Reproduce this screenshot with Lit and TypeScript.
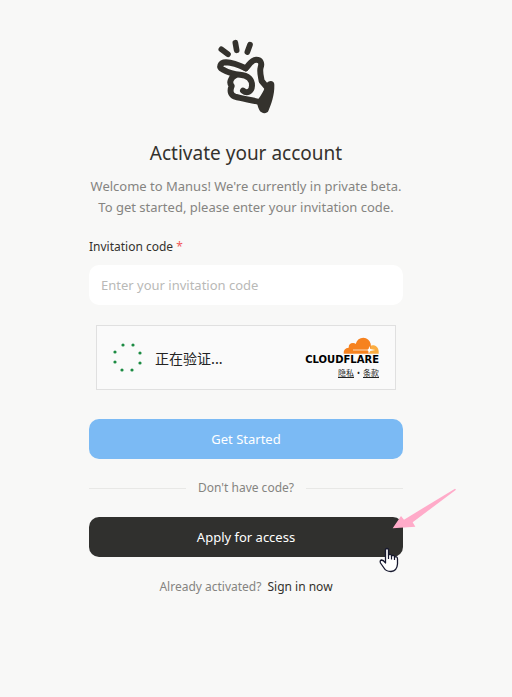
import { LitElement, html, css, svg } from "lit";
import { customElement } from "lit/decorators.js";

const SPINNER_DOTS = [
  [18, 4], [28, 4], [35, 12], [35, 22], [27, 29], [17, 29], [10, 21], [10, 11],
];

@customElement("turnstile-box")
class TurnstileBox extends LitElement {
  static styles = css`
    :host {
      display: flex;
      align-items: center;
      justify-content: space-between;
      box-sizing: border-box;
      width: 100%;
      max-width: 300px;
      height: 65px;
      padding: 0 16px 0 8px;
      border: 1px solid #e0e0e0;
      background: #fafafa;
      color: #232323;
    }
    .status {
      display: flex;
      align-items: center;
      gap: 6px;
      font: 14px/20px "Noto Sans CJK SC", sans-serif;
    }
    .spinner { display: block; }
    .brand {
      display: flex;
      flex-direction: column;
      align-items: flex-end;
    }
    .cloud { display: block; }
    .name {
      font: bold 10px/12px "DejaVu Sans", "Verdana", sans-serif;
      color: #000;
    }
    .links {
      display: flex;
      gap: 3px;
      margin-top: 1px;
      font: 8px/12px "Noto Sans CJK SC", sans-serif;
    }
    .dot { font-family: "Noto Sans", sans-serif; }
    a { color: #232323; text-decoration: underline; }
  `;

  render() {
    return html`
      <div class="status" role="status">
        <svg class="spinner" width="44" height="34" viewBox="0 0 44 34" aria-hidden="true">
          ${SPINNER_DOTS.map(([x, y]) => svg`<circle cx=${x} cy=${y} r="1.6" fill="#1c8b43" />`)}
        </svg>
        <span>正在验证...</span>
      </div>
      <div class="brand">
        <svg class="cloud" width="36" height="17" viewBox="0 0 108 51" aria-hidden="true">
          <path fill="#fbad41" d="M79 50L82 28Q86 23 93 25Q105 28 107 42V50Z" />
          <path fill="#f6821f" d="M2 50Q1 33 17 32Q17 18 30 18Q36 18 38 21Q44 2 61 2Q78 3 83 20Q85 28 79 50Z" />
          <path fill="none" stroke="#fbd9b8" stroke-width="3" d="M30 39H73" />
          <path fill="#fff" d="M79 27L82 36L97 39L82 42L77 50L76 42L72 39L77 35Z" />
        </svg>
        <span class="name">CLOUDFLARE</span>
        <div class="links"><a href="#privacy">隐私</a><span class="dot">•</span><a href="#terms">条款</a></div>
      </div>
    `;
  }
}

@customElement("app-root")
class AppRoot extends LitElement {
  static styles = css`
    :host {
      display: flex;
      flex-direction: column;
      align-items: center;
      box-sizing: border-box;
      min-height: 100vh;
      padding: 30px 20px 30px 0;
      background: #f8f8f7;
      color: #34322d;
      font: 13px/20px "Noto Sans", sans-serif;
    }
    .panel {
      display: flex;
      flex-direction: column;
      width: 100%;
      max-width: 314px;
    }
    .logo { display: block; align-self: center; }
    h1 {
      margin: 20px 0 10px;
      font-size: 19px;
      line-height: 26px;
      font-weight: 400;
      text-align: center;
    }
    .intro {
      margin: 0 0 19px;
      line-height: 21px;
      color: #858481;
      text-align: center;
      white-space: nowrap;
      align-self: center;
    }
    label { margin-bottom: 8px; font-size: 12px; }
    .required { color: #f25a5a; }
    input {
      box-sizing: border-box;
      width: 100%;
      height: 40px;
      margin: 0;
      padding: 0 12px;
      border: 0;
      border-radius: 10px;
      background: #fff;
      color: inherit;
      font: inherit;
    }
    input::placeholder { color: #b9b9b7; opacity: 1; }
    turnstile-box { align-self: center; margin: 20px 0 29px; }
    button {
      width: 100%;
      height: 40px;
      padding: 0;
      border: 0;
      border-radius: 10px;
      color: #fff;
      font: inherit;
    }
    .primary { background: #7bbaf4; }
    .dark { display: block; background: #30302e; }
    .divider {
      display: flex;
      align-items: center;
      gap: 12px;
      margin: 19px 0;
      font-size: 12px;
      color: #858481;
    }
    .divider::before,
    .divider::after {
      content: "";
      flex: 1;
      height: 1px;
      background: #e8e8e6;
    }
    .apply { position: relative; }
    .pointer, .arrow { position: absolute; pointer-events: none; }
    .pointer { right: 4px; top: 30px; }
    .arrow { right: -53px; top: -30px; }
    .signin {
      display: flex;
      justify-content: center;
      gap: 6px;
      margin: 20px 0 0;
      font-size: 12px;
      color: #858481;
    }
    .signin a { color: #34322d; text-decoration: none; }
  `;

  render() {
    return html`
      <main class="panel">
        <svg class="logo" width="80" height="90" viewBox="0 0 240 270" aria-hidden="true">
          <g fill="none" stroke="#34322d" stroke-linecap="round" stroke-linejoin="round">
            <path stroke-width="17" d="M46 58L66 73M88 38L92 61M132 44L124 66" />
            <path stroke-width="18" d="M119 115C100 106 80 98 60 97C42 97 37 112 51 119C67 128 80 133 102 134C126 135 139 150 138 167C137 187 122 191 111 182" />
            <path stroke-width="18" d="M119 115C130 105 135 89 151 89C165 89 168 101 164 112C160 124 165 140 167 153L181 170" />
            <path stroke-width="18" d="M87 137C75 143 68 157 77 168C71 182 73 195 87 200C109 207 135 209 165 217" />
          </g>
          <path fill="#34322d" d="M180 163C187 149 205 150 205 164C206 196 195 224 187 243C183 252 166 252 160 240C156 230 150 219 157 207C165 195 173 184 176 173Z" />
        </svg>
        <h1>Activate your account</h1>
        <p class="intro">
          Welcome to Manus! We're currently in private beta.<br />
          To get started, please enter your invitation code.
        </p>
        <label for="code">Invitation code <span class="required">*</span></label>
        <input id="code" type="text" placeholder="Enter your invitation code" required />
        <turnstile-box></turnstile-box>
        <button class="primary" type="button">Get Started</button>
        <div class="divider">Don't have code?</div>
        <div class="apply">
          <button class="dark" type="button">Apply for access</button>
          <svg class="arrow" width="72" height="44" viewBox="0 0 216 132" aria-hidden="true">
            <path fill="#ffabc9" d="M213 5L216 8L86 106L94 119L26 124L51 87L60 98Z" />
          </svg>
          <svg class="pointer" width="20" height="26" viewBox="0 0 20 26" aria-hidden="true">
            <path fill="#fff" stroke="#16182e" stroke-width="1.3" stroke-linejoin="round"
              d="M6.5 16V3Q6.5 1.5 8 1.5T9.5 3V8Q12 6.500 12.500 9Q15 7.500 15.500 10Q18.500 9 18.500 12V17Q18 24 12 24.500Q7 24.500 5 21L1.500 16Q.5 13.500 2.500 13Q4.500 13 6.500 16Z" />
            <path fill="none" stroke="#16182e" stroke-width="1.200" d="M9.500 8V12M12.500 9V12.500M15.500 10V13" />
          </svg>
        </div>
        <p class="signin">Already activated? <a href="#signin">Sign in now</a></p>
      </main>
    `;
  }
}
